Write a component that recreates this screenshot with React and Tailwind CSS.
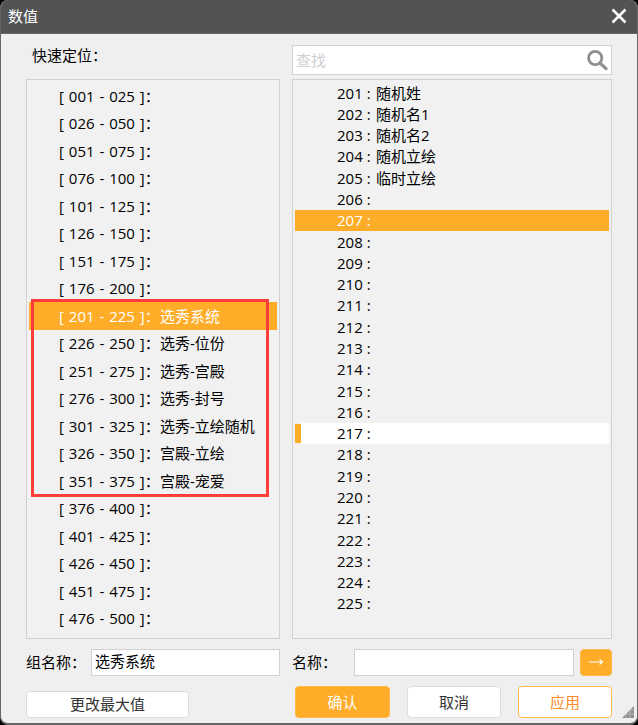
import { useState } from "react"

const groupNames = {
  201: "选秀系统",
  226: "选秀-位份",
  251: "选秀-宫殿",
  276: "选秀-封号",
  301: "选秀-立绘随机",
  326: "宫殿-立绘",
  351: "宫殿-宠爱",
}

const valueNames = {
  201: "随机姓",
  202: "随机名1",
  203: "随机名2",
  204: "随机立绘",
  205: "临时立绘",
}

const pad = (n) => String(n).padStart(3, "0")

const groups = Array.from({ length: 20 }, (_, i) => i * 25 + 1)
const values = Array.from({ length: 25 }, (_, i) => 201 + i)

function GroupRow({ start, selected, onSelect }) {
  return (
    <li className="flex flex-1">
      <button
        type="button"
        onClick={onSelect}
        className={`flex flex-1 items-center pl-[30px] text-left leading-5 whitespace-pre ${
          selected ? "bg-[#ffac28] text-white" : "text-black"
        }`}
      >
        <span className="flex w-[101px] gap-px">
          <span>{"[ "}</span>
          <span>{`${pad(start)} `}</span>
          <span>{"- "}</span>
          <span>{`${pad(start + 24)} `}</span>
          <span>]：</span>
        </span>
        <span>{groupNames[start]}</span>
      </button>
    </li>
  )
}

function ValueRow({ id, selected, hovered, onSelect }) {
  return (
    <li className="flex flex-1">
      {hovered && <span className="my-px w-[6px] bg-[#ffac28]" />}
      <button
        type="button"
        onClick={onSelect}
        className={`flex flex-1 items-center text-left leading-5 ${hovered ? "pl-[36px]" : "pl-[42px]"} ${
          selected ? "bg-[#ffac28] text-white" : hovered ? "bg-white text-black" : "text-black"
        }`}
      >
        <span className="w-[39px]">{id} :</span>
        <span>{valueNames[id]}</span>
      </button>
    </li>
  )
}

function SearchIcon() {
  return (
    <svg viewBox="0 0 22 22" className="size-[22px]" fill="none" stroke="#8f8f8f">
      <circle cx="9.2" cy="9" r="6.6" strokeWidth="2.8" />
      <path d="M14 14l6 5.6" strokeWidth="3.2" strokeLinecap="round" />
    </svg>
  )
}

function ResizeGrip() {
  return (
    <svg viewBox="0 0 12 12" className="absolute right-[3px] bottom-[5px] size-3">
      <path d="M12 0v12H0z" fill="#8f8f8f" />
      <path d="M8 4h4M4 8h8M8 4v8M4 8v4" stroke="#c8c8c8" strokeWidth=".7" />
    </svg>
  )
}

export default function App() {
  const [group, setGroup] = useState(201)
  const [value, setValue] = useState(207)

  return (
    <div className="min-h-screen flex bg-black font-['Open_Sans','Noto_Sans_CJK_SC',sans-serif] text-[15px]">
      <div className="relative flex flex-1 flex-col overflow-hidden rounded-lg border-x border-b-2 border-[#666] bg-[#efefef]">
        {/* Title bar */}
        <header className="flex h-[34px] items-center justify-between border-b border-[#666] bg-[#535353] pr-[10px] pb-px pl-[7px] text-white">
          <h1 className="leading-5">数值</h1>
          <button type="button" aria-label="关闭">
            <svg viewBox="0 0 16 16" className="size-4" fill="none" stroke="#fff" strokeWidth="2.5">
              <path d="M1.5 1.5l13 13M14.5 1.5l-13 13" />
            </svg>
          </button>
        </header>

        <main className="flex flex-1 flex-col px-[25px] pt-[11px] pb-[5px]">
          <div className="grid flex-1 grid-cols-[minmax(0,254fr)_minmax(0,320fr)] grid-rows-[30px_1fr] gap-x-3 gap-y-1">
            <h2 className="pl-[6px] leading-5">快速定位：</h2>
            <div className="flex items-center border border-[#d1d1d1] bg-white pr-[3px]">
              <input
                type="text"
                aria-label="查找"
                placeholder="查找"
                className="min-w-0 flex-1 px-[3px] leading-5 outline-none placeholder:text-[#d0d0d0]"
              />
              <button type="button" aria-label="搜索">
                <SearchIcon />
              </button>
            </div>

            {/* Groups */}
            <div className="relative flex border border-[#d1d1d1] bg-[#f1f1f1] px-[2px] pt-[2px] pb-[6px]">
              <ul className="flex flex-1 flex-col">
                {groups.map((start) => (
                  <GroupRow
                    key={start}
                    start={start}
                    selected={start === group}
                    onSelect={() => setGroup(start)}
                  />
                ))}
              </ul>
              <div className="pointer-events-none absolute top-[219px] right-[10px] left-1 h-[198px] border-3 border-[#ff3c3c]" />
            </div>

            {/* Values of the group */}
            <ul className="flex flex-col border border-[#d1d1d1] bg-[#f1f1f1] px-[2px] pt-[2px] pb-6">
              {values.map((id) => (
                <ValueRow
                  key={id}
                  id={id}
                  selected={id === value}
                  hovered={id === 217}
                  onSelect={() => setValue(id)}
                />
              ))}
            </ul>
          </div>

          <div className="mt-[10px] grid grid-cols-[minmax(0,254fr)_minmax(0,320fr)] gap-x-3 gap-y-[10px]">
            <div className="flex h-[27px] items-center">
              <label htmlFor="group-name" className="w-[65px] shrink-0 pb-[2px] leading-5 whitespace-nowrap">
                组名称：
              </label>
              <input
                id="group-name"
                type="text"
                defaultValue="选秀系统"
                className="h-full min-w-0 flex-1 border border-[#d1d1d1] bg-white px-[3px] pb-1 leading-5 outline-none"
              />
            </div>
            <div className="flex h-[27px] items-center">
              <label htmlFor="value-name" className="w-[62px] shrink-0 pb-[2px] leading-5 whitespace-nowrap">
                名称：
              </label>
              <input
                id="value-name"
                type="text"
                className="h-full min-w-0 flex-1 border border-[#d1d1d1] bg-white px-[3px] pb-1 leading-5 outline-none"
              />
              <button
                type="button"
                aria-label="转到"
                className="ml-[6px] flex h-full w-8 items-center justify-center rounded border border-[#ffb84a] bg-[#ffac28] pb-px text-white"
              >
                <svg viewBox="0 0 16 8" className="h-2 w-4" fill="none" stroke="currentColor" strokeWidth="1.1">
                  <path d="M1 4h13.5M11.5 1.5L14.5 4l-3 2.5" />
                </svg>
              </button>
            </div>

            <div className="flex items-end">
              <button
                type="button"
                className="h-[27px] w-[163px] rounded border border-[#dcdcdc] bg-white pb-px leading-5 text-[#333]"
              >
                更改最大值
              </button>
            </div>
            <div className="flex h-8 justify-between pl-[3px]">
              <button type="button" className="w-[95px] rounded border border-[#ffb84a] bg-[#ffac28] leading-5 text-white">
                确认
              </button>
              <button type="button" className="w-[94px] rounded border border-[#dcdcdc] bg-white leading-5 text-[#333]">
                取消
              </button>
              <button type="button" className="w-[94px] rounded border border-[#ffb84a] bg-white leading-5 text-[#ff8a28]">
                应用
              </button>
            </div>
          </div>
        </main>

        <ResizeGrip />
      </div>
    </div>
  )
}
